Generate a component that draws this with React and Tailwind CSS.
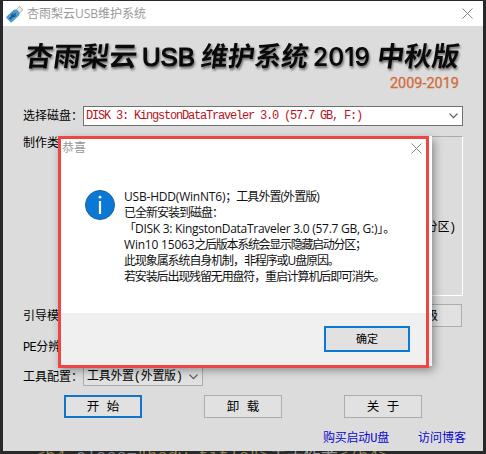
const song = "font-['Liberation_Mono','Noto_Sans_CJK_SC',monospace]";
const ui = "font-['Open_Sans','Noto_Sans_CJK_SC',sans-serif]";

function Close() {
  return (
    <svg width="11" height="11" viewBox="0 0 11 11" stroke="#858585" strokeWidth="1" fill="none">
      <path d="M.5 .5 10.5 10.5M10.5 .5 .5 10.5" />
    </svg>
  );
}

function Chevron() {
  return (
    <svg width="9" height="6" viewBox="0 0 9 6" stroke="#555" strokeWidth="1.2" fill="none">
      <path d="M.5 .7 4.5 4.7 8.5 .7" />
    </svg>
  );
}

function UsbIcon() {
  return (
    <svg width="18" height="18" viewBox="0 0 18 18">
      <g transform="rotate(-43 9 9)">
        <rect x="13" y="6.6" width="4.6" height="4.8" fill="#e8e8e8" stroke="#a5a5a5" strokeWidth=".8" />
        <path d="M1.5 5.2H11l2.2 1.4v4.8L11 12.8H1.5Q0 12.8 0 11.3V6.7Q0 5.2 1.5 5.2Z" fill="#4b9bd3" />
        <path d="M2 9H10M4.5 9 6 7.5H8M5.5 9 7 10.5H8.5" fill="none" stroke="#1d4a70" strokeWidth="1" />
        <circle cx="2.8" cy="9" r="1" fill="#1d4a70" />
      </g>
    </svg>
  );
}

function Banner() {
  const brush = {
    fontFamily: "'Noto Sans CJK SC', sans-serif",
    fontSize: 27,
    fontWeight: 700,
    lengthAdjust: "spacingAndGlyphs",
  };
  return (
    <svg width="480" height="74" viewBox="3 26 480 74" className="block shrink-0">
      <g fill="#0a0a0a" className="drop-shadow-[1px_2px_1px_rgba(0,0,0,0.5)]">
        <g transform="translate(0 66) skewX(-8) translate(0 -66)">
          <text {...brush} x="24" y="66" textLength="112">杏雨梨云</text>
          <text {...brush} x="200" y="66" textLength="107">维护系统</text>
          <text {...brush} x="376" y="66" textLength="82">中秋版</text>
        </g>
        <text x="142" y="66" fontFamily="'Liberation Sans', sans-serif" fontSize="26" stroke="#0a0a0a" strokeWidth="1.1" textLength="53" lengthAdjust="spacingAndGlyphs">USB</text>
        <text x="313" y="66" fontFamily="Inter, sans-serif" fontSize="26" fontWeight="600" textLength="57" lengthAdjust="spacingAndGlyphs">2019</text>
      </g>
      <text x="390" y="88" fontSize="15.5" fill="#d26b38" stroke="#d26b38" strokeWidth=".3" fontFamily="Roboto, sans-serif" textLength="69" lengthAdjust="spacingAndGlyphs">2009-2019</text>
    </svg>
  );
}

function PushButton({ children, primary }) {
  return (
    <button className={`flex h-[23px] w-[78px] items-center justify-center bg-[#e1e1e1] pt-[3px] text-[12.5px] ${primary ? "border-2 border-[#1274c9]" : "border border-[#adadad]"}`}>
      {children}
    </button>
  );
}

function Dialog() {
  return (
    <div className={`absolute left-[59px] top-[136px] h-[230px] w-[373px] bg-white shadow-[2px_4px_9px_rgba(0,0,0,0.4)] ${ui}`}>
      <div className="flex h-full flex-col">
        <div className="flex h-6 items-center justify-between pl-[3px] pr-[10px] text-[12px] text-[#999]">
          <span>恭喜</span>
          <Close />
        </div>
        <div className="flex flex-1 pl-[26px] pt-[29px]">
          <svg width="30" height="30" viewBox="0 0 30 30" className="mt-px shrink-0">
            <circle cx="15" cy="15" r="14.5" fill="#0b78d4" stroke="#1965a8" />
            <rect x="13.9" y="11" width="2.2" height="13" fill="#fff" />
            <circle cx="15" cy="7.2" r="1.4" fill="#fff" />
          </svg>
          <div className="ml-[9px] whitespace-pre text-[12px] leading-4 text-[#111]">
            <p><span className="tracking-[-0.2px]">USB-HDD(WinNT6)</span><span className="tracking-[-0.95px]">；工具外置(外置版)</span></p>
            <p className="tracking-[-1px]">已全新安装到磁盘：</p>
            <p><span className="tracking-[-1px]">「</span><span className="tracking-[-0.27px]">DISK 3: KingstonDataTraveler 3.0 (57.7 GB, G:)</span><span>」</span><span>。</span></p>
            <p><span className="tracking-[-0.2px]">Win10 15063</span><span className="tracking-[-1.3px]">之后版本系统会显示隐藏启动分区；</span></p>
            <p className="tracking-[-1.1px]">此现象属系统自身机制，非程序或U盘原因。</p>
            <p className="tracking-[-1.15px]">若安装后出现残留无用盘符，重启计算机后即可消失。</p>
          </div>
        </div>
        <div className="flex h-[53px] justify-end bg-[#f0f0f0] pr-[22px] pt-[13px]">
          <button className="flex h-[26px] w-[86px] items-center justify-center border-2 border-[#0b78d4] bg-[#e1e1e1] pt-px text-[11px] text-black">确定</button>
        </div>
      </div>
      <div className="absolute -left-px top-0 h-[232px] w-[371px] border-[3px] border-[#ef4545]" />
    </div>
  );
}

export default function App() {
  return (
    <div className={`relative h-[454px] w-[486px] overflow-hidden bg-[#292929] pl-[3px] pt-px text-[12px] text-black ${song}`}>
      <div className="flex h-[450px] w-[480px] flex-col bg-[#dcdcdc]">
        <div className={`flex h-[25px] shrink-0 items-center bg-white pl-[3px] pr-[10px] text-[12px] text-[#999] ${ui}`}>
          <UsbIcon />
          <span className="ml-[3px] flex-1">杏雨梨云USB维护系统</span>
          <Close />
        </div>
        <Banner />
        <div className="mt-[6px] flex h-5 shrink-0 items-center pl-5">
          <span className="w-[60px] shrink-0 whitespace-nowrap pt-px">选择磁盘：</span>
          <div className="flex h-5 w-[380px] items-center justify-between border border-[#707070] bg-white pl-[2px] pr-1 text-[12px] text-[#b51420]">
            <span className="whitespace-pre tracking-[-1.2px]">DISK 3: KingstonDataTraveler 3.0 (57.7 GB, F:)</span>
            <Chevron />
          </div>
        </div>
        <div className="mt-[10px] flex h-[160px] shrink-0 pl-5">
          <span className="w-[60px] shrink-0 whitespace-nowrap leading-4">制作类型：</span>
          <div className="flex h-[160px] w-[380px] items-center justify-end border border-b-white border-l-[#aaa] border-r-white border-t-[#aaa] pr-[6px] pt-[24px]">
            <span className="tracking-[-0.3px]">(含隐藏分区)</span>
          </div>
        </div>
        <div className="mt-2 flex h-[23px] shrink-0 items-center justify-between pl-5 pr-[21px]">
          <span className="pt-[3px]">引导模式：</span>
          <button className="flex h-[23px] w-[78px] items-center justify-end border border-[#adadad] bg-[#e1e1e1] pr-[23px] pt-[2px]">升级</button>
        </div>
        <div className="mt-[9px] flex h-[23px] shrink-0 items-center pl-5"><span className="tracking-[-0.6px]">PE</span>分辨率：</div>
        <div className="mt-[6px] flex h-[21px] shrink-0 items-center pl-5">
          <span className="w-[60px] shrink-0 whitespace-nowrap pt-[4px]">工具配置：</span>
          <div className="flex h-[21px] w-[120px] items-center justify-between border border-[#adadad] bg-[#e1e1e1] pl-[3px] pr-1 pt-[3px]">
            <span className="whitespace-nowrap tracking-[-0.3px]">工具外置(外置版)</span>
            <Chevron />
          </div>
        </div>
        <div className="mt-[9px] flex shrink-0 gap-[62px] pl-[61px]">
          <PushButton primary>开 始</PushButton>
          <PushButton>卸 载</PushButton>
          <PushButton>关 于</PushButton>
        </div>
        <div className="mt-[12px] flex justify-end gap-[29px] pr-[17px] text-[#0808cc]">
          <a className="tracking-[-0.2px]">购买启动U盘</a>
          <a>访问博客</a>
        </div>
      </div>
      <div className="h-[3px] overflow-hidden whitespace-pre pl-[32px] text-[17px] leading-[12px] text-[#8c8350]">{'<h4 '}<span className="text-[#7b8a94]">class=</span>{'"body-title">'}<span className="text-[#8d9499]">关于作者</span>{'</h4>'}</div>
      <Dialog />
    </div>
  );
}
